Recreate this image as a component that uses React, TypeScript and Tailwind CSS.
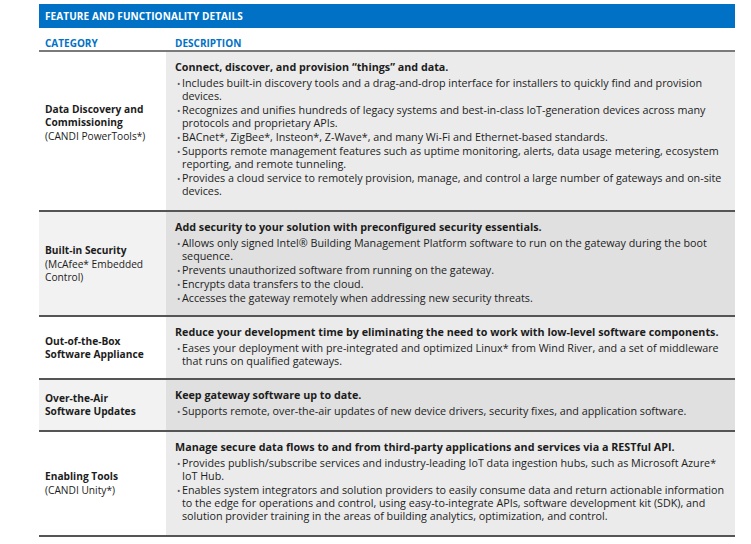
type Row = {
  title: string[];
  sub?: string[];
  lead: string;
  bullets: string[][];
  shade: boolean;
  pad: string;
  nudge?: boolean;
};

const rows: Row[] = [
  {
    title: ['Data Discovery and', 'Commissioning'],
    sub: ['(CANDI PowerTools*)'],
    lead: 'Connect, discover, and provision “things” and data.',
    bullets: [
      ['Includes built-in discovery tools and a drag-and-drop interface for installers to quickly find and provision', 'devices.'],
      ['Recognizes and unifies hundreds of legacy systems and best-in-class IoT-generation devices across many', 'protocols and proprietary APIs.'],
      ['BACnet*, ZigBee*, Insteon*, Z-Wave*, and many Wi-Fi and Ethernet-based standards.'],
      ['Supports remote management features such as uptime monitoring, alerts, data usage metering, ecosystem', 'reporting, and remote tunneling.'],
      ['Provides a cloud service to remotely provision, manage, and control a large number of gateways and on-site', 'devices.'],
    ],
    shade: false,
    pad: 'pb-[12px]',
    nudge: true,
  },
  {
    title: ['Built-in Security'],
    sub: ['(McAfee* Embedded', 'Control)'],
    lead: 'Add security to your solution with preconfigured security essentials.',
    bullets: [
      ['Allows only signed Intel® Building Management Platform software to run on the gateway during the boot', 'sequence.'],
      ['Prevents unauthorized software from running on the gateway.'],
      ['Encrypts data transfers to the cloud.'],
      ['Accesses the gateway remotely when addressing new security threats.'],
    ],
    shade: true,
    pad: 'pb-[10px]',
  },
  {
    title: ['Out-of-the-Box', 'Software Appliance'],
    lead: 'Reduce your development time by eliminating the need to work with low-level software components.',
    bullets: [
      ['Eases your deployment with pre-integrated and optimized Linux* from Wind River, and a set of middleware', 'that runs on qualified gateways.'],
    ],
    shade: false,
    pad: 'pb-[10px]',
  },
  {
    title: ['Over-the-Air', 'Software Updates'],
    lead: 'Keep gateway software up to date.',
    bullets: [['Supports remote, over-the-air updates of new device drivers, security fixes, and application software.']],
    shade: true,
    pad: 'pb-[12px]',
  },
  {
    title: ['Enabling Tools'],
    sub: ['(CANDI Unity*)'],
    lead: 'Manage secure data flows to and from third-party applications and services via a RESTful API.',
    bullets: [
      ['Provides publish/subscribe services and industry-leading IoT data ingestion hubs, such as Microsoft Azure*', 'IoT Hub.'],
      [
        'Enables system integrators and solution providers to easily consume data and return actionable information',
        'to the edge for operations and control, using easy-to-integrate APIs, software development kit (SDK), and',
        'solution provider training in the areas of building analytics, optimization, and control.',
      ],
    ],
    shade: false,
    pad: 'pb-[12px]',
  },
];

function Lines({ lines }: { lines: string[] }) {
  return (
    <>
      {lines.map((l) => (
        <div key={l} className="whitespace-nowrap">
          {l}
        </div>
      ))}
    </>
  );
}

export default function App() {
  return (
    <div className="min-h-screen bg-white pt-1 pl-[39px] text-[#1c1c1c] font-['Open_Sans',sans-serif] text-[10px] leading-[13px]">
      <div className="w-[696px]">
        {/* Title bar */}
        <div className="h-[24px] bg-[#0071c5] flex items-center px-[6px] text-white font-bold text-[10px] tracking-[0.1px]">
          FEATURE AND FUNCTIONALITY DETAILS
        </div>

        {/* Column heads */}
        <div className="flex h-[24px] items-center text-[#0071c5] font-bold border-b-2 border-[#7a7a7a] pt-[8px]">
          <div className="w-[127px] pl-[6px]">CATEGORY</div>
          <div className="pl-[9px]">DESCRIPTION</div>
        </div>

        {rows.map((r) => (
          <div key={r.lead} className="flex border-b-2 border-[#555]">
            <div
              className={`w-[127px] shrink-0 flex flex-col justify-center pl-[6px] text-[10.2px] ${
                r.shade ? 'bg-[#f2f2f2]' : 'bg-white'
              } ${r.nudge ? 'pb-[16px]' : ''}`}
            >
              <div className="font-bold">
                <Lines lines={r.title} />
              </div>
              {r.sub && (
                <div className="mt-px">
                  <Lines lines={r.sub} />
                </div>
              )}
            </div>
            <div
              className={`flex-1 pl-[9px] pt-[9px] text-[10.75px] ${r.pad} ${
                r.shade ? 'bg-[#e0e0e0]' : 'bg-[#ebebeb]'
              }`}
            >
              <div className="font-bold mb-[3px] whitespace-nowrap">{r.lead}</div>
              <div className="flex flex-col gap-px">
                {r.bullets.map((b) => (
                  <div key={b[0]} className="flex">
                    <span className="w-[7px] shrink-0 pl-[2px] text-[9px] text-[#555]">•</span>
                    <div>
                      <Lines lines={b} />
                    </div>
                  </div>
                ))}
              </div>
            </div>
          </div>
        ))}
      </div>
    </div>
  );
}
